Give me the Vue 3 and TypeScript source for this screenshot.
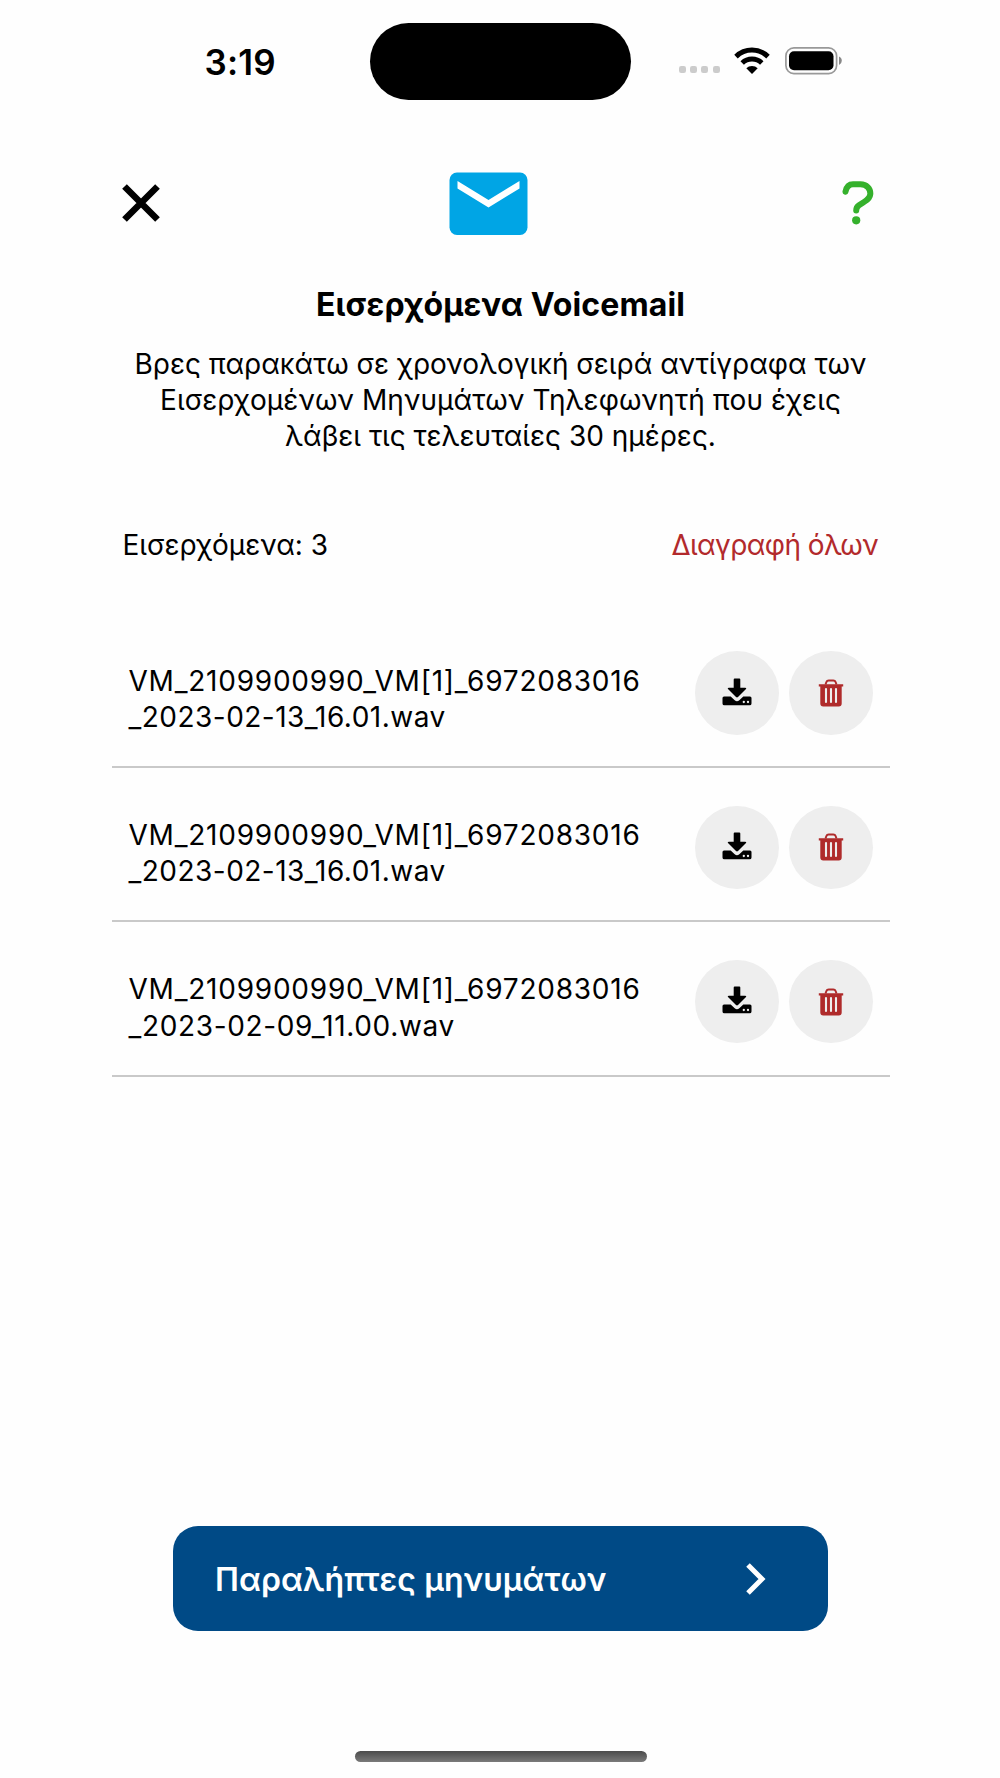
<script setup lang="ts">
interface FileLine {
  text: string
  spacing: number
}

interface Voicemail {
  id: number
  lines: FileLine[]
}

const prefix: FileLine = { text: 'VM_2109900990_VM[1]_6972083016', spacing: 0.77 }

const voicemails: Voicemail[] = [
  { id: 1, lines: [prefix, { text: '_2023-02-13_16.01.wav', spacing: 0.48 }] },
  { id: 2, lines: [prefix, { text: '_2023-02-13_16.01.wav', spacing: 0.48 }] },
  { id: 3, lines: [prefix, { text: '_2023-02-09_11.00.wav', spacing: 0.65 }] },
]
</script>

<template>
  <main class="screen">
    <header class="status">
      <span class="time">3:19</span>
      <span class="island"></span>
      <span class="indicators">
        <span class="dots"><i v-for="n in 4" :key="n"></i></span>
        <svg class="wifi" width="36" height="28" viewBox="0 0 36 28">
          <g fill="none" stroke="#000" stroke-width="5">
            <path d="M2 9.6a23 23 0 0 1 32 0" />
            <path d="M8.2 16a14.2 14.2 0 0 1 19.600 0" />
          </g>
          <path d="M12.300 21.300a8 8 0 0 1 11.400 0L18 27z" />
        </svg>
        <svg class="battery" width="58" height="28" viewBox="0 0 58 28">
          <rect x="0.900" y="0.900" width="50.700" height="25.700" rx="8" fill="none" stroke="#999" stroke-width="1.700" />
          <rect x="4" y="4.300" width="44.500" height="19" rx="5" />
          <path d="M54 9.500q2.800 1.200 2.800 4.300T54 18.100z" fill="#888" />
        </svg>
      </span>
    </header>

    <nav class="toolbar">
      <svg class="close" width="40" height="40" viewBox="0 0 40 40">
        <path d="M3.500 3.500 36.500 36.500M36.500 3.500 3.500 36.500" stroke="#000" stroke-width="6.600" />
      </svg>
      <svg class="mail" width="79" height="64" viewBox="0 0 79 64">
        <rect x="0.500" y="0.500" width="78" height="62.500" rx="7.500" fill="#00a5e5" />
        <path d="M8.500 9 39.500 28 70.500 9V16.500L39.500 35.500 8.500 16.500z" fill="#fff" />
      </svg>
      <svg class="help" width="32" height="44" viewBox="0 0 32 44">
        <path d="M3.500 10.700Q5 3.300 11 3.300h7.500C24.500 3.300 28.600 7.500 28.300 13c-.3 4-2.800 6-6.300 8l-5 3.200q-2.800 1.900-2.800 5.200" fill="none" stroke="#35b12c" stroke-width="6" stroke-linecap="round" />
        <circle cx="14.200" cy="39.300" r="4.100" fill="#35b12c" />
      </svg>
    </nav>

    <section class="intro">
      <h1>Εισερχόμενα Voicemail</h1>
      <p>
        Βρες παρακάτω σε χρονολογική σειρά αντίγραφα των<br />
        <span class="wide">Εισερχομένων Μηνυμάτων Τηλεφωνητή που έχεις</span><br />
        λάβει τις τελευταίες 30 ημέρες.
      </p>
    </section>

    <div class="summary">
      <span class="count">Εισερχόμενα: 3</span>
      <span class="clear">Διαγραφή όλων</span>
    </div>

    <ul class="list">
      <li v-for="item in voicemails" :key="item.id" class="row">
        <div class="name">
          <div v-for="line in item.lines" :key="line.text" :style="{ letterSpacing: line.spacing + 'px' }">{{ line.text }}</div>
        </div>
        <div class="actions">
          <button class="round" type="button" aria-label="Λήψη">
            <svg width="30" height="28" viewBox="0 0 30 28">
              <path d="M2 18.500h6.700l4 3.700q2.300 1.900 4.600 0l4-3.700H28q1.500 0 1.500 1.600v5.300q0 1.900-1.900 1.900H2.400q-1.900 0-1.900-1.900v-5.300q0-1.600 1.500-1.600z" />
              <path d="M12.700.500h4.600q1 0 1 1v8.200h5q1.700.1.700 1.400l-8 8q-1 .9-2 0l-8-8q-1-1.300.7-1.400h5V1.500q0-1 1-1z" />
              <circle cx="21.800" cy="24" r="1.150" fill="#eee" />
              <circle cx="26" cy="24" r="1.150" fill="#eee" />
            </svg>
          </button>
          <button class="round" type="button" aria-label="Διαγραφή">
            <svg width="26" height="28" viewBox="0 0 26 28">
              <path d="M7.500 5.500 8.400 3Q9 1.400 10.700 1.400h4.600Q17 1.400 17.600 3l.9 2.500" fill="none" stroke="#af2b2b" stroke-width="2" />
              <path d="M.800 5.200h24.400v2.400h-1.500V24.500q0 3-3 3H5.300q-3 0-3-3V7.600H.800z" fill="#af2b2b" />
              <path d="M8 10v13M13 10v13M18 10v13" stroke="#eee" stroke-width="2.100" stroke-linecap="round" />
            </svg>
          </button>
        </div>
      </li>
    </ul>

    <button class="recipients" type="button">
      <span>Παραλήπτες μηνυμάτων</span>
      <svg width="20" height="32" viewBox="0 0 20 32">
        <path d="M2 2 16 16 2 30" fill="none" stroke="#fff" stroke-width="5" />
      </svg>
    </button>

    <div class="home"></div>
  </main>
</template>

<style>
body {
  margin: 0;
  background: #fefefe;
}
</style>

<style scoped>
.screen {
  box-sizing: border-box;
  display: flex;
  flex-direction: column;
  width: 1000px;
  height: 1778px;
  padding: 0 110px 0 112px;
  overflow: hidden;
  background: #fefefe;
  color: #000;
  font: 400 28px/36.200px Inter, sans-serif;
}

.status {
  display: flex;
  align-items: flex-start;
  height: 171.500px;
}

.time {
  width: 165px;
  padding-left: 92.500px;
  margin-top: 42px;
  font-size: 35px;
  font-weight: 600;
  line-height: 40px;
  letter-spacing: 0.200px;
}

.island {
  width: 261px;
  height: 77px;
  margin-top: 23.200px;
  border-radius: 39px;
  background: #000;
}

.indicators {
  display: flex;
  align-items: flex-start;
  padding: 47px 0 0 48.500px;
}

.dots {
  display: flex;
  gap: 4.200px;
  padding-top: 19.400px;
}

.dots i {
  width: 7px;
  height: 7px;
  border-radius: 2.200px;
  background: #ccc;
}

.wifi {
  margin: 0 0 0 14px;
}

.battery {
  margin: 0 0 0 15px;
}

.toolbar {
  display: flex;
  height: 64.500px;
}

.close {
  margin: 11px 0 0 9px;
}

.mail {
  margin-left: 288px;
}

.help {
  margin: 9px 0 0 313.500px;
}

.intro {
  margin-top: 48px;
  text-align: center;
}

h1 {
  margin: 0 1px 0 0;
  font-size: 32px;
  font-weight: 700;
  line-height: 42px;
  letter-spacing: 0.120px;
}

p {
  margin: 20px 1px 0 0;
  white-space: nowrap;
}

.wide {
  letter-spacing: 0.070px;
}

.summary {
  display: flex;
  justify-content: space-between;
  margin-top: 72px;
  padding: 0 12px 0 10.500px;
}

.clear {
  color: #b22a2c;
  letter-spacing: -0.580px;
}

.list {
  margin: 51px 0 0;
  padding: 0;
  list-style: none;
}

.row {
  box-sizing: border-box;
  display: flex;
  justify-content: space-between;
  height: 154.300px;
  padding: 37.500px 17.500px 0 16.500px;
  border-bottom: 2px solid #c9c9c9;
}

.name {
  padding-top: 11.500px;
  white-space: nowrap;
}

.actions {
  display: flex;
  gap: 10.500px;
}

.round {
  display: flex;
  align-items: center;
  justify-content: center;
  width: 83.500px;
  height: 83.500px;
  padding: 0 0 3px;
  border: 0;
  border-radius: 50%;
  background: #eee;
}

.round + .round {
  padding-bottom: 0;
}

.recipients {
  box-sizing: border-box;
  display: flex;
  align-items: center;
  justify-content: space-between;
  width: 655px;
  height: 105px;
  margin: auto 0 0 61px;
  padding: 0 62px 0 42px;
  border: 0;
  border-radius: 25px;
  background: #004a86;
  color: #fff;
  font: 600 32px/42px Inter, sans-serif;
  letter-spacing: 0.120px;
}

.recipients span {
  padding-top: 3px;
}

.home {
  width: 292px;
  height: 10.500px;
  margin: 120px 0 16.500px 243px;
  border-radius: 6px;
  background: linear-gradient(#4b4b4b, #7a7a7a);
}
</style>
